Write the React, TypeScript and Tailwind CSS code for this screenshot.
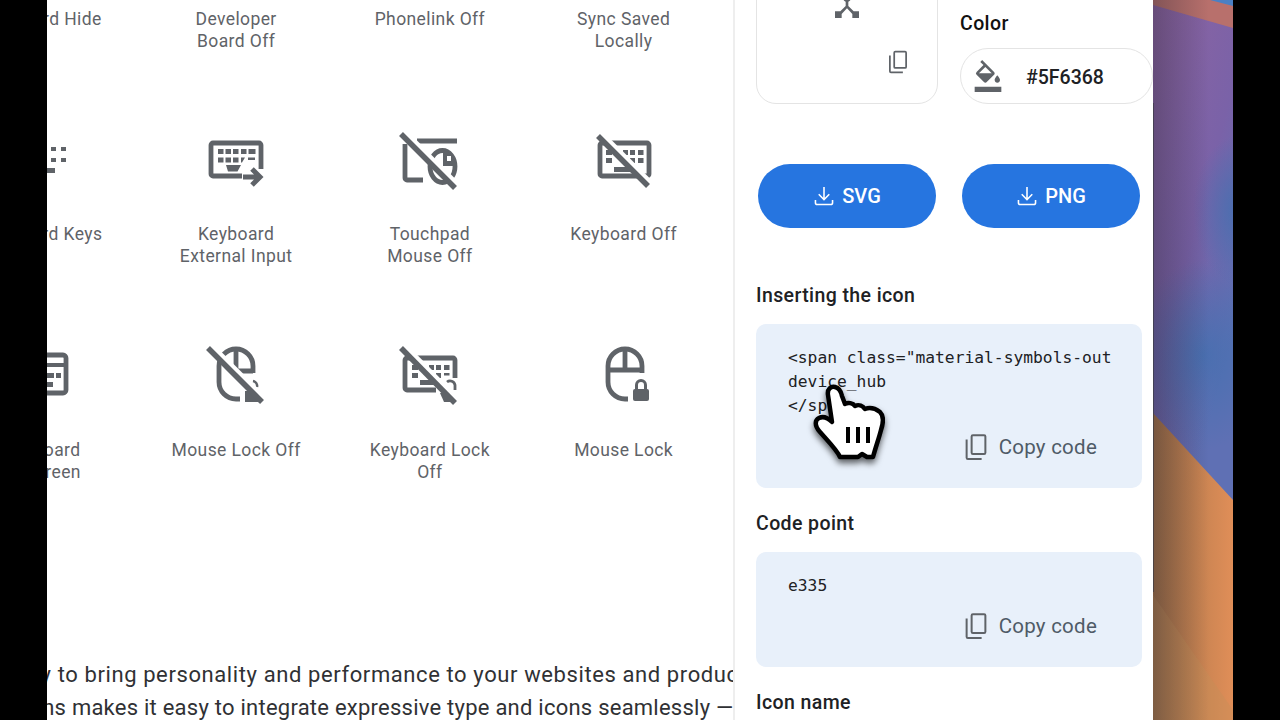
import React from 'react';
import { MdDeviceHub, MdFormatColorFill } from 'react-icons/md';

const ink = '#5f6368';

// off icons get a white gap on the upper right of the strike
function Strike({ x1, y1, x2, y2 }: { x1: number; y1: number; x2: number; y2: number }) {
    return (
        <>
            <path d={`M${x1 + 3} ${y1 - 3}L${x2 + 3} ${y2 - 3}`} stroke="#fff" strokeWidth={5} fill="none" />
            <path d={`M${x1} ${y1}L${x2} ${y2}`} stroke={ink} strokeWidth={5.5} fill="none" />
        </>
    );
}

function Glyph({ children }: { children?: React.ReactNode }) {
    return (
        <svg viewBox="0 0 64 64" className="h-16 w-16 shrink-0" fill={ink}>
            {children}
        </svg>
    );
}

const line = { fill: 'none', stroke: ink, strokeWidth: 4.8 };

function KeyboardKeys() {
    return (
        <Glyph>
            <path d="M8 18h5v4H8zM19 18h5v4h-5zM30 18h5v4h-5zM41 18h5v4h-5zM51 18h5v4h-5zM8 29h5v4H8zM19 29h5v4h-5zM30 29h5v4h-5zM41 29h5v4h-5zM51 29h5v4h-5zM20 39h25v5H20z" />
        </Glyph>
    );
}

function KeyboardExternalInput() {
    return (
        <Glyph>
            <path {...line} d="M38 47H9a2 2 0 0 1-2-2V16a2 2 0 0 1 2-2h46a2 2 0 0 1 2 2v24" />
            <path d="M14 20h5.500v5H14zM21.500 20h5.500v5h-5.500zM29 20h5.500v5H29zM37 20h5.500v5H37zM44.500 20h7v5h-7zM14 28.500h5.500v5H14zM21.500 28.500h5.500v5h-5.500zM29 28.500h5.500v5H29zM37 28.500h4l-3 5h-1zM44 28.500h7v2.500h-7zM22 36h15l-3.500 6.500H24z" />
            <path {...line} d="M39 48h17M48 40l8 8-8 8" strokeWidth={5} />
        </Glyph>
    );
}

function TouchpadMouseOff() {
    return (
        <Glyph>
            <path {...line} d="M19 12h40M7 15v34a2 2 0 0 0 2 2h16" />
            <ellipse cx={44.5} cy={37.5} rx={12.5} ry={16} {...line} />
            <path d="M45 22a12 15 0 0 1 12 15H45z" />
            <path d="M49 27h4v5h-4z" fill="#fff" />
            <Strike x1={3} y1={5} x2={57} y2={59} />
        </Glyph>
    );
}

function KeyboardOff() {
    return (
        <Glyph>
            <rect x={8} y={14} width={49} height={33} rx={2} {...line} />
            <path d="M14 21h6v5h-6zM22 21h5v5h-5zM31 21h5v5h-5zM38 21h5v5h-5zM46 21h5.500v5H46zM14 29h6v5h-6zM38 29h5v5h-5zM46 29h5.500v5H46zM22 38h17v5H22z" />
            <Strike x1={6} y1={7} x2={56} y2={57} />
        </Glyph>
    );
}

function KeyboardOnscreen() {
    return (
        <Glyph>
            <rect x={6} y={11} width={50} height={38} rx={3} {...line} />
            <path d="M6 19h50v4H6zM37 29h7v5h-7zM46 29h5v5h-5zM30 38h13v5H30z" />
        </Glyph>
    );
}

function MouseLockOff() {
    return (
        <Glyph>
            <path {...line} d="M49 29v-7a17 17 0 0 0-34 0v16a17 17 0 0 0 17 17h4" />
            <path {...line} d="M32 5v22h17" />
            <path d="M41 47h8l9 11H41z" />
            <path {...line} strokeWidth={2.5} d="M49 37a5 5 0 0 1 4 6" />
            <Strike x1={4} y1={4} x2={58} y2={58} />
        </Glyph>
    );
}

function KeyboardLockOff() {
    return (
        <Glyph>
            <path {...line} d="M38 46H9a2 2 0 0 1-2-2V16a2 2 0 0 1 2-2h46a2 2 0 0 1 2 2v18" />
            <path d="M14 21h6v5h-6zM22 21h5v5h-5zM31 21h5v5h-5zM38 21h5v5h-5zM46 21h5.500v5H46zM14 29h6v5h-6zM38 29h5v5h-5zM46 29h5.500v2.500H46zM22 36h15v5H22z" />
            <path d="M42 49h8l8 9H46z" />
            <path {...line} strokeWidth={2.8} d="M49 38a5 5 0 0 1 8 3v5" />
            <Strike x1={3} y1={4} x2={57} y2={59} />
        </Glyph>
    );
}

function MouseLock() {
    return (
        <Glyph>
            <path {...line} d="M50 29v-7a17 17 0 0 0-34 0v16a17 17 0 0 0 17 17h3" />
            <path {...line} d="M33 5v21M16 26h34" />
            <rect x={41} y={45} width={16} height={12} rx={2} />
            <path {...line} strokeWidth={3} d="M44.500 45v-4a4.500 4.500 0 0 1 9 0v4" />
        </Glyph>
    );
}

const rows: { icon?: React.ReactNode; label: string }[] = [
    { label: 'Keyboard Hide' },
    { label: 'Developer\nBoard Off' },
    { label: 'Phonelink Off' },
    { label: 'Sync Saved\nLocally' },
    { icon: <KeyboardKeys />, label: 'Keyboard Keys' },
    { icon: <KeyboardExternalInput />, label: 'Keyboard\nExternal Input' },
    { icon: <TouchpadMouseOff />, label: 'Touchpad\nMouse Off' },
    { icon: <KeyboardOff />, label: 'Keyboard Off' },
    { icon: <KeyboardOnscreen />, label: 'Keyboard\nOnscreen' },
    { icon: <MouseLockOff />, label: 'Mouse Lock Off' },
    { icon: <KeyboardLockOff />, label: 'Keyboard Lock\nOff' },
    { icon: <MouseLock />, label: 'Mouse Lock' },
];

function CopyGlyph({ className }: { className: string }) {
    return (
        <svg viewBox="0 0 24 24" className={className} fill="none" stroke="currentColor" strokeWidth={1.6}>
            <rect x={8.5} y={2.5} width={11} height={15} rx={1} />
            <path d="M4.500 6v14.500a1 1 0 0 0 1 1h11" />
        </svg>
    );
}

function DownloadGlyph() {
    return (
        <svg viewBox="0 -960 960 960" className="h-7 w-7" fill="#fff">
            <path d="M480-320 280-520l38-39 135 135v-366h54v366l135-135 38 39-200 200ZM240-160q-33 0-56.500-23.500T160-240v-100h54v100q0 26 26 26h480q26 0 26-26v-100h54v100q0 33-23.500 56.500T720-160H240Z" />
        </svg>
    );
}

function CopyCode() {
    return (
        <div className="flex items-center justify-end gap-[8px] pr-[45px] pb-[26px] text-[20.5px] leading-7 tracking-[0.25px] text-[#4f5b67]">
            <CopyGlyph className="h-[30px] w-[30px] text-[#5f6368]" />
            <span>Copy code</span>
        </div>
    );
}

function HandCursor() {
    return (
        <svg
            viewBox="0 0 80 85"
            className="absolute top-[380px] left-[810px] h-[85px] w-20 drop-shadow-[0_4px_3px_rgba(0,0,0,0.6)]"
        >
            <path
                d="M18 15C17 9 21 6 25 7C29 8 31 11 32 16L35 24C38 22 43 23 45 26C49 24 53 26 55 29C60 27 66 29 70 32C74 36 73 44 71 50C69 58 66 66 63 77L57 77L52 74L48 77L30 77C27 70 18 61 10 52C4 45 5 40 9 38C13 36 18 38 22 42Z"
                fill="#fff"
                stroke="#000"
                strokeWidth={4.5}
                strokeLinejoin="round"
            />
            <path d="M38 47v16M48 47v16M58 47v16" stroke="#000" strokeWidth={4} fill="none" />
        </svg>
    );
}

function Wallpaper() {
    return (
        <svg viewBox="0 0 80 720" preserveAspectRatio="none" className="h-full w-20 shrink-0">
            <defs>
                <linearGradient id="sky" x1="0" y1="0" x2="0.4" y2="1">
                    <stop offset="0" stopColor="#8f64a0" />
                    <stop offset="0.45" stopColor="#7a62a8" />
                    <stop offset="0.75" stopColor="#5f70b4" />
                </linearGradient>
                <radialGradient id="blob" cx="0.5" cy="0.5" r="0.5">
                    <stop offset="0" stopColor="#4270b0" stopOpacity="0.8" />
                    <stop offset="1" stopColor="#4270b0" stopOpacity="0" />
                </radialGradient>
                <linearGradient id="sand" x1="0" y1="0" x2="1" y2="0">
                    <stop offset="0" stopColor="#a87448" />
                    <stop offset="1" stopColor="#e08e58" />
                </linearGradient>
                <linearGradient id="edge" x1="0" y1="0" x2="1" y2="0">
                    <stop offset="0" stopColor="#1f2030" stopOpacity="0.35" />
                    <stop offset="0.7" stopColor="#1f2030" stopOpacity="0" />
                </linearGradient>
            </defs>
            <rect width="80" height="720" fill="url(#sky)" />
            <ellipse cx="85" cy="210" rx="45" ry="75" fill="url(#blob)" />
            <ellipse cx="50" cy="355" rx="70" ry="95" fill="url(#blob)" />
            <path d="M0 0H80V28L0 5Z" fill="#b8706c" />
            <path d="M57 0H80V6Z" fill="#4a80c4" />
            <path d="M0 413L80 500V720H0Z" fill="url(#sand)" />
            <path d="M0 595L80 710V720H0Z" fill="#c49058" opacity="0.35" />
            <rect width="80" height="720" fill="url(#edge)" />
            <rect y="103" width="1" height="489" fill="#3a3a44" opacity="0.7" />
        </svg>
    );
}

export default function App() {
    return (
        <div className="relative flex h-[720px] w-[1280px] overflow-hidden bg-black font-['Roboto',sans-serif]">
            <div className="w-[47px] shrink-0" />

            <main className="flex h-full w-[686px] shrink-0 flex-col overflow-hidden bg-white">
                <div className="-mt-[87px] -ml-[101.5px] grid w-[775px] shrink-0 grid-cols-4">
                    {rows.map((item) => (
                        <div key={item.label} className="flex h-[215.5px] flex-col items-center">
                            {item.icon ?? <Glyph />}
                            <p className="mt-[30.5px] text-center text-[17.5px] leading-[22px] tracking-[0.4px] whitespace-pre-line text-[#5f6368]">
                                {item.label}
                            </p>
                        </div>
                    ))}
                </div>
                <div className="mt-[98px] text-[22px] leading-[33px] whitespace-nowrap text-[#303134]">
                    <p className="-ml-[353px] tracking-[0.6px]">Using Google Fonts is an easy way to bring personality and performance to your websites and products.</p>
                    <p className="-ml-[483px] tracking-[0.24px]">Our robust catalog of open-source fonts and icons makes it easy to integrate expressive type and icons seamlessly —</p>
                </div>
            </main>

            <aside className="flex h-full w-[420px] shrink-0 flex-col overflow-hidden border-l-2 border-[#eeeeee] bg-white pl-[21px]">
                <div className="-mt-[96px] flex h-[200px] shrink-0 gap-[22px]">
                    <div className="relative flex w-[182px] justify-center rounded-[20px] border-[1.5px] border-[#e4e4e4] pt-[85px]">
                        <MdDeviceHub className="h-8 w-8 text-[#5f6368]" />
                        <CopyGlyph className="absolute top-[144px] right-[26px] h-[26px] w-[26px] text-[#5f6368]" />
                    </div>
                    <div className="flex w-[193px] flex-col justify-end">
                        <h3 className="mb-3 text-[19.5px] leading-6 font-medium tracking-[0.4px] text-[#111]">Color</h3>
                        <div className="flex h-14 items-center gap-[22px] rounded-full border-[1.5px] border-[#e4e4e4] pl-[11px]">
                            <MdFormatColorFill className="h-8 w-8 text-[#5f6368]" />
                            <span className="pt-1 text-[19.5px] font-medium text-[#202124]">#5F6368</span>
                        </div>
                    </div>
                </div>

                <div className="mt-[60px] ml-[2px] flex shrink-0 gap-[26px]">
                    {['SVG', 'PNG'].map((label) => (
                        <button
                            key={label}
                            className="flex h-16 w-[178px] items-center justify-center gap-1 rounded-full bg-[#2675e0] pr-[3px] text-[20px] font-medium text-white"
                        >
                            <DownloadGlyph />
                            {label}
                        </button>
                    ))}
                </div>

                <h3 className="mt-14 shrink-0 text-[19.5px] leading-6 font-medium tracking-[0.4px] text-[#202124]">Inserting the icon</h3>
                <div className="mt-4 flex h-[164px] w-[386px] shrink-0 flex-col justify-between rounded-[10px] bg-[#e8f0fa] pt-[22px]">
                    <pre className="ml-8 w-[323px] overflow-hidden font-['DejaVu_Sans_Mono',monospace] text-[16.3px] leading-6 text-[#202124]">
                        {'<span class="material-symbols-outlined">\ndevice_hub\n</span>'}
                    </pre>
                    <CopyCode />
                </div>

                <h3 className="mt-6 shrink-0 text-[19.5px] leading-6 font-medium tracking-[0.4px] text-[#202124]">Code point</h3>
                <div className="mt-4 flex h-[115px] w-[386px] shrink-0 flex-col justify-between rounded-[10px] bg-[#e8f0fa] pt-[22px]">
                    <pre className="ml-8 font-['DejaVu_Sans_Mono',monospace] text-[16.3px] leading-6 text-[#202124]">e335</pre>
                    <CopyCode />
                </div>

                <h3 className="mt-6 shrink-0 text-[19.5px] leading-6 font-medium tracking-[0.4px] text-[#202124]">Icon name</h3>
            </aside>

            <Wallpaper />
            <HandCursor />
        </div>
    );
}
